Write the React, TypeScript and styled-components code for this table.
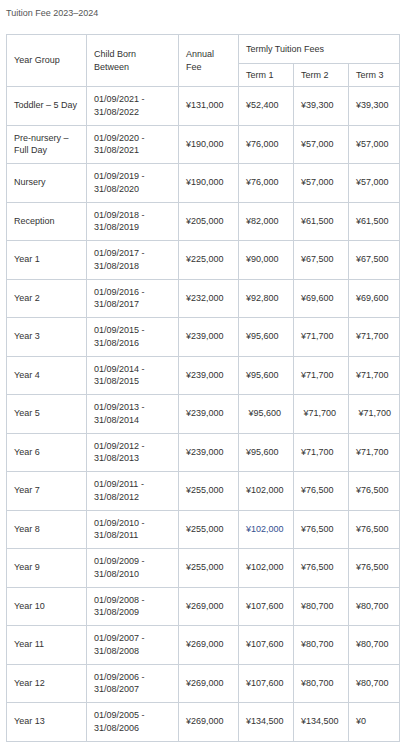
import React from "react";
import styled, { createGlobalStyle } from "styled-components";

const Global = createGlobalStyle`
  html, body { margin: 0; padding: 0; background: #ffffff; }
  body { font-family: "Liberation Sans", Arial, sans-serif; }
`;

const Page = styled.div`
  padding: 6px 6px 0 6px;
  color: #333333;
  font-family: "Liberation Sans", Arial, sans-serif;
  font-size: 9px;
`;

const Title = styled.div`
  font-size: 9px;
  line-height: 12px;
  color: #555555;
  padding-top: 1px;
  margin-bottom: 15px;
`;

const Table = styled.table`
  border-collapse: collapse;
  table-layout: fixed;
  width: 393px;
  border: 1px solid #cbd2da;
`;

const Cell = styled.td<{ $tall?: boolean }>`
  border: 1px solid #cbd2da;
  padding: 0 4px 0 7px;
  vertical-align: middle;
  text-align: left;
  font-weight: normal;
  line-height: 12.6px;
  color: #333333;
  white-space: normal;
`;

const HeadCell = styled(Cell).attrs({ as: "th" })``;

const HeadRowTop = styled.tr`
  height: 29px;
`;

const HeadRowSub = styled.tr`
  height: 23px;
`;

const BodyRow = styled.tr`
  height: 38.5px;
`;

const Link = styled.span`
  color: #34508f;
`;

type Row = {
  year: string;
  from: string;
  to: string;
  annual: string;
  t1: string;
  t2: string;
  t3: string;
  linkT1?: boolean;
};

const rows: Row[] = [
  { year: "Toddler – 5 Day", from: "01/09/2021 -", to: "31/08/2022", annual: "¥131,000", t1: "¥52,400", t2: "¥39,300", t3: "¥39,300" },
  { year: "Pre-nursery – Full Day", from: "01/09/2020 -", to: "31/08/2021", annual: "¥190,000", t1: "¥76,000", t2: "¥57,000", t3: "¥57,000" },
  { year: "Nursery", from: "01/09/2019 -", to: "31/08/2020", annual: "¥190,000", t1: "¥76,000", t2: "¥57,000", t3: "¥57,000" },
  { year: "Reception", from: "01/09/2018 -", to: "31/08/2019", annual: "¥205,000", t1: "¥82,000", t2: "¥61,500", t3: "¥61,500" },
  { year: "Year 1", from: "01/09/2017 -", to: "31/08/2018", annual: "¥225,000", t1: "¥90,000", t2: "¥67,500", t3: "¥67,500" },
  { year: "Year 2", from: "01/09/2016 -", to: "31/08/2017", annual: "¥232,000", t1: "¥92,800", t2: "¥69,600", t3: "¥69,600" },
  { year: "Year 3", from: "01/09/2015 -", to: "31/08/2016", annual: "¥239,000", t1: "¥95,600", t2: "¥71,700", t3: "¥71,700" },
  { year: "Year 4", from: "01/09/2014 -", to: "31/08/2015", annual: "¥239,000", t1: "¥95,600", t2: "¥71,700", t3: "¥71,700" },
  { year: "Year 5", from: "01/09/2013 -", to: "31/08/2014", annual: "¥239,000", t1: "\u00a0¥95,600", t2: "\u00a0¥71,700", t3: "\u00a0¥71,700" },
  { year: "Year 6", from: "01/09/2012 -", to: "31/08/2013", annual: "¥239,000", t1: "¥95,600", t2: "¥71,700", t3: "¥71,700" },
  { year: "Year 7", from: "01/09/2011 -", to: "31/08/2012", annual: "¥255,000", t1: "¥102,000", t2: "¥76,500", t3: "¥76,500" },
  { year: "Year 8", from: "01/09/2010 -", to: "31/08/2011", annual: "¥255,000", t1: "¥102,000", t2: "¥76,500", t3: "¥76,500", linkT1: true },
  { year: "Year 9", from: "01/09/2009 -", to: "31/08/2010", annual: "¥255,000", t1: "¥102,000", t2: "¥76,500", t3: "¥76,500" },
  { year: "Year 10", from: "01/09/2008 -", to: "31/08/2009", annual: "¥269,000", t1: "¥107,600", t2: "¥80,700", t3: "¥80,700" },
  { year: "Year 11", from: "01/09/2007 -", to: "31/08/2008", annual: "¥269,000", t1: "¥107,600", t2: "¥80,700", t3: "¥80,700" },
  { year: "Year 12", from: "01/09/2006 -", to: "31/08/2007", annual: "¥269,000", t1: "¥107,600", t2: "¥80,700", t3: "¥80,700" },
  { year: "Year 13", from: "01/09/2005 -", to: "31/08/2006", annual: "¥269,000", t1: "¥134,500", t2: "¥134,500", t3: "¥0" },
];

export default function App() {
  return (
    <Page>
      <Global />
      <Title>Tuition Fee 2023–2024</Title>
      <Table>
        <colgroup>
          <col style={{ width: 80 }} />
          <col style={{ width: 92 }} />
          <col style={{ width: 60 }} />
          <col style={{ width: 55 }} />
          <col style={{ width: 55 }} />
          <col style={{ width: 51 }} />
        </colgroup>
        <thead>
          <HeadRowTop>
            <HeadCell rowSpan={2}>Year Group</HeadCell>
            <HeadCell rowSpan={2}>
              Child Born
              <br />
              Between
            </HeadCell>
            <HeadCell rowSpan={2}>
              Annual
              <br />
              Fee
            </HeadCell>
            <HeadCell colSpan={3}>Termly Tuition Fees</HeadCell>
          </HeadRowTop>
          <HeadRowSub>
            <HeadCell>Term 1</HeadCell>
            <HeadCell>Term 2</HeadCell>
            <HeadCell>Term 3</HeadCell>
          </HeadRowSub>
        </thead>
        <tbody>
          {rows.map((r) => (
            <BodyRow key={r.year}>
              <Cell>{r.year === "Pre-nursery – Full Day" ? (<>Pre-nursery –<br />Full Day</>) : r.year}</Cell>
              <Cell>
                {r.from}
                <br />
                {r.to}
              </Cell>
              <Cell>{r.annual}</Cell>
              <Cell>{r.linkT1 ? <Link>{r.t1}</Link> : r.t1}</Cell>
              <Cell>{r.t2}</Cell>
              <Cell>{r.t3}</Cell>
            </BodyRow>
          ))}
        </tbody>
      </Table>
    </Page>
  );
}
